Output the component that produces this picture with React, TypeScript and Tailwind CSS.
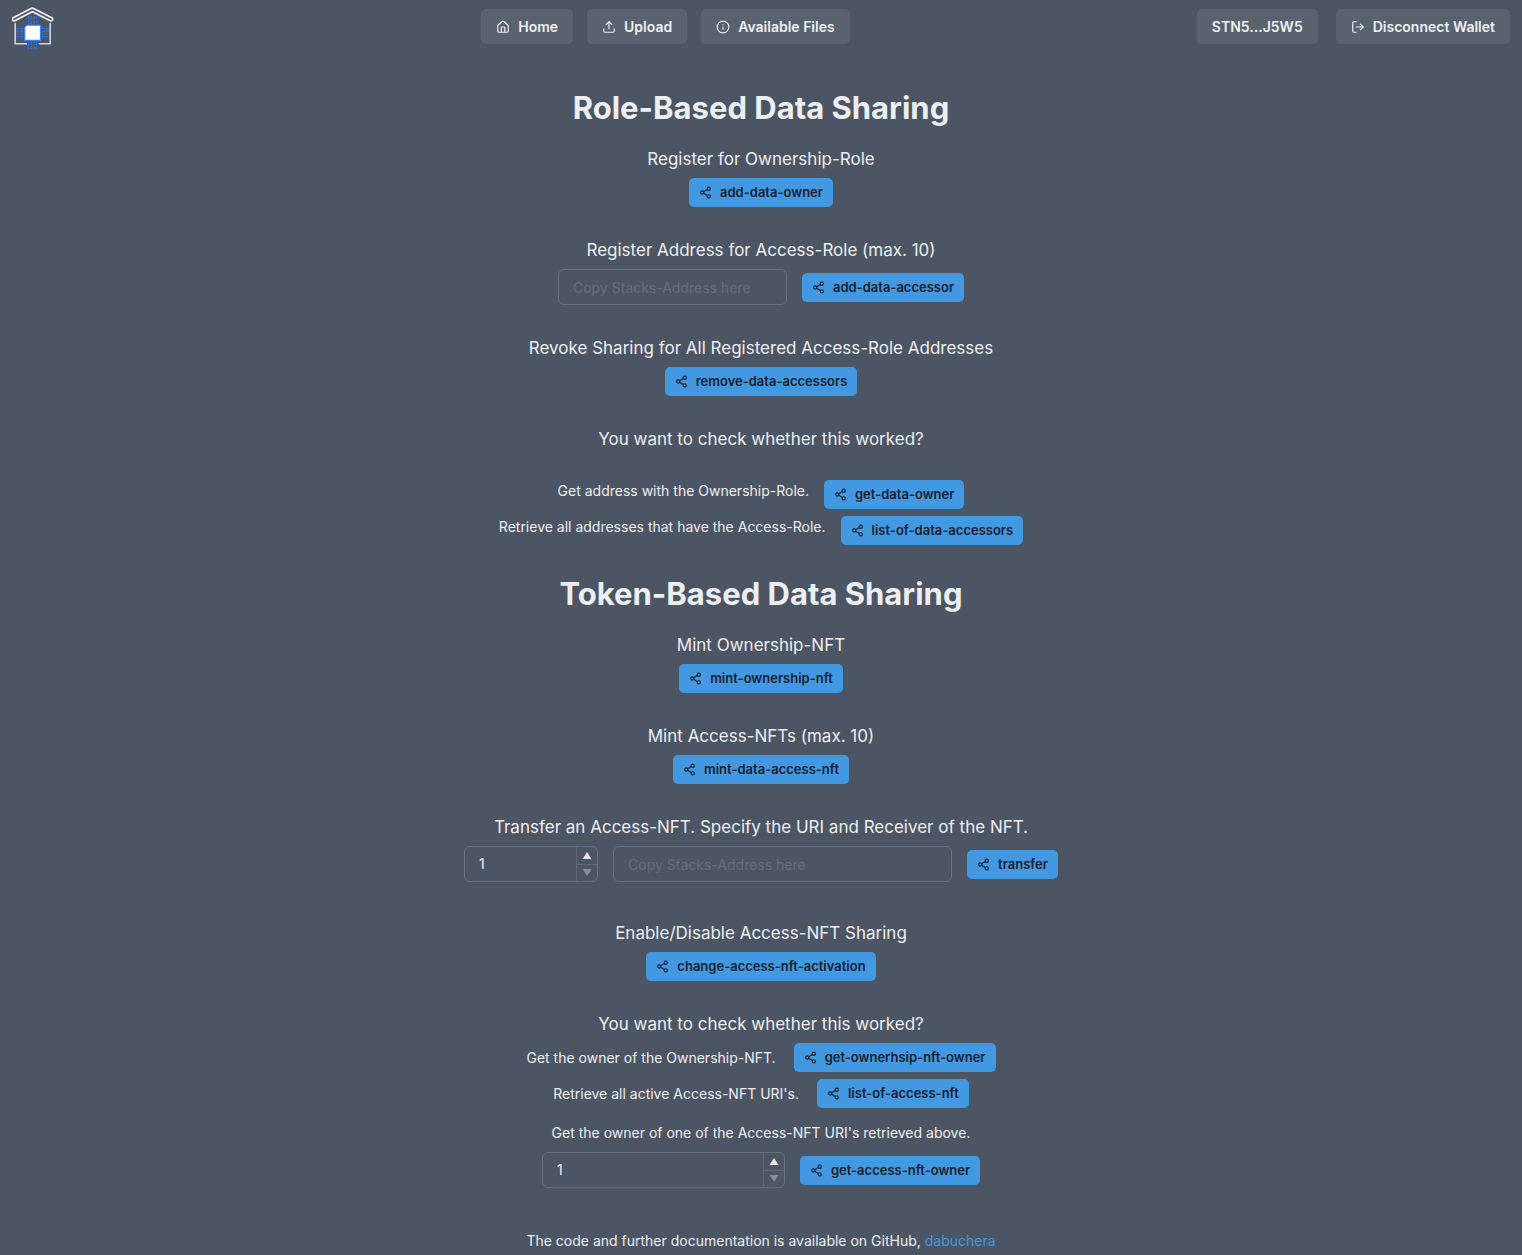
import { useState, type ReactNode } from "react";
import { House, Info, LogOut, Share2, Upload } from "lucide-react";

function Logo() {
  return (
    <svg width="44" height="46" viewBox="12 5 44 46" fill="none" aria-hidden="true">
      <path d="M15.2 23v20.7H27M38.8 43.7H50.2V23" stroke="#cfd4dc" strokeWidth="1.6" />
      <path
        d="M14 19.2 32.3 9.8 51 19.2"
        stroke="#f1f3f5"
        strokeWidth="5"
        strokeLinecap="round"
        strokeLinejoin="round"
      />
      <path
        d="M14 19.2 32.3 9.8 51 19.2"
        stroke="#4c5564"
        strokeWidth="1.8"
        strokeLinecap="round"
        strokeLinejoin="round"
      />
      <g stroke="#2f74e0" strokeWidth="1.2" strokeDasharray="3.4 0.9">
        <path d="M28.6 23.8v-8M31.3 23.8v-8M34 23.8v-8M36.7 23.8v-8" />
        <path d="M28.6 41.6v8M31.3 41.6v8M34 41.6v8M36.7 41.6v8" />
        <path d="M23.4 28.6h-7M23.4 31.3h-7M23.4 34h-7M23.4 36.7h-7" />
        <path d="M41.6 28.6h7M41.6 31.3h7M41.6 34h7M41.6 36.7h7" />
      </g>
      <path d="M26.8 25.2h13.7v15.2H24.7V27.4z" fill="#fff" stroke="#3b82f6" strokeWidth="1.2" />
    </svg>
  );
}

function NavButton({ icon, children }: { icon?: ReactNode; children: ReactNode }) {
  return (
    <button
      type="button"
      className="flex h-[35px] items-center gap-2 rounded-[5px] bg-[#59626f] px-[15px] text-sm font-semibold text-[#eef0f2]"
    >
      {icon}
      {children}
    </button>
  );
}

function ActionButton({ children }: { children: ReactNode }) {
  return (
    <button
      type="button"
      className="flex h-[29px] items-center gap-2 rounded-[5px] bg-[#4299e1] px-2.5 text-[13px] font-semibold text-[#1a202c]"
    >
      <Share2 size={13} strokeWidth={2} />
      {children}
    </button>
  );
}

function Section({ title, children }: { title: string; children?: ReactNode }) {
  return (
    <section className="flex flex-col items-center gap-[5px]">
      <h2 className="text-[17px] leading-7">{title}</h2>
      {children}
    </section>
  );
}

function AddressInput({ className }: { className: string }) {
  return (
    <input
      type="text"
      aria-label="Stacks address"
      placeholder="Copy Stacks-Address here"
      className={`h-9 rounded-md border border-[#687180] bg-transparent px-3.5 text-sm placeholder:text-[#656e7b] ${className}`}
    />
  );
}

function NumberInput({ label, className }: { label: string; className: string }) {
  const [value, setValue] = useState(1);
  return (
    <div className={`flex h-9 overflow-hidden rounded-md border border-[#687180] ${className}`}>
      <input
        type="number"
        aria-label={label}
        value={value}
        min={1}
        onChange={(e) => setValue(Number(e.target.value))}
        className="min-w-0 flex-1 appearance-none bg-transparent px-3.5 text-sm outline-none [appearance:textfield] [&::-webkit-inner-spin-button]:appearance-none"
      />
      <div className="flex w-[21px] flex-col divide-y divide-[#5f6877] border-l border-[#5f6877]">
        <button
          type="button"
          aria-label="Increase"
          onClick={() => setValue(value + 1)}
          className="flex flex-1 items-center justify-center"
        >
          <svg width="10" height="7" viewBox="0 0 10 7" aria-hidden="true">
            <path d="M5 0 9.5 7h-9z" fill="#e2e4e7" />
          </svg>
        </button>
        <button
          type="button"
          aria-label="Decrease"
          disabled={value <= 1}
          onClick={() => setValue(value - 1)}
          className="flex flex-1 items-center justify-center"
        >
          <svg width="10" height="7" viewBox="0 0 10 7" aria-hidden="true">
            <path d="M5 7 .5 0h9z" fill="#888e98" />
          </svg>
        </button>
      </div>
    </div>
  );
}

export default function App() {
  return (
    <div className="min-h-screen bg-[#4c5564] font-['Inter',sans-serif] text-sm text-[#eceef0]">
      <header className="flex items-start justify-between px-3 pt-[9px]">
        <a href="#" aria-label="Start page" className="-mt-1 w-[122px]">
          <Logo />
        </a>
        <nav className="flex gap-3.5">
          <NavButton icon={<House size={14} />}>Home</NavButton>
          <NavButton icon={<Upload size={14} />}>Upload</NavButton>
          <NavButton icon={<Info size={14} />}>Available Files</NavButton>
        </nav>
        <div className="flex gap-[18px]">
          <NavButton>STN5...J5W5</NavButton>
          <NavButton icon={<LogOut size={14} />}>Disconnect Wallet</NavButton>
        </div>
      </header>

      <main className="flex flex-col items-center pt-9">
        <h1 className="mb-4 text-[31px] leading-[42px] font-bold">Role-Based Data Sharing</h1>
        <div className="flex flex-col gap-[29px]">
          <Section title="Register for Ownership-Role">
            <ActionButton>add-data-owner</ActionButton>
          </Section>
          <Section title="Register Address for Access-Role (max. 10)">
            <div className="flex items-center gap-[15px]">
              <AddressInput className="w-[229px]" />
              <ActionButton>add-data-accessor</ActionButton>
            </div>
          </Section>
          <Section title="Revoke Sharing for All Registered Access-Role Addresses">
            <ActionButton>remove-data-accessors</ActionButton>
          </Section>
          <Section title="You want to check whether this worked?">
            <div className="mt-[22px] flex flex-col items-center gap-[7px]">
              <div className="flex items-start gap-[15px]">
                <p className="leading-[22px]">Get address with the Ownership-Role.</p>
                <ActionButton>get-data-owner</ActionButton>
              </div>
              <div className="flex items-start gap-[15px]">
                <p className="leading-[22px]">Retrieve all addresses that have the Access-Role.</p>
                <ActionButton>list-of-data-accessors</ActionButton>
              </div>
            </div>
          </Section>
        </div>

        <h1 className="mt-7 mb-4 text-[31px] leading-[42px] font-bold">Token-Based Data Sharing</h1>
        <div className="flex flex-col gap-[29px]">
          <Section title="Mint Ownership-NFT">
            <ActionButton>mint-ownership-nft</ActionButton>
          </Section>
          <Section title="Mint Access-NFTs (max. 10)">
            <ActionButton>mint-data-access-nft</ActionButton>
          </Section>
          <Section title="Transfer an Access-NFT. Specify the URI and Receiver of the NFT.">
            <div className="mb-2 flex items-center gap-[15px]">
              <NumberInput label="NFT URI to transfer" className="w-[134px]" />
              <AddressInput className="w-[339px]" />
              <ActionButton>transfer</ActionButton>
            </div>
          </Section>
          <Section title="Enable/Disable Access-NFT Sharing">
            <ActionButton>change-access-nft-activation</ActionButton>
          </Section>
          <Section title="You want to check whether this worked?">
            <div className="flex flex-col items-center gap-[7px]">
              <div className="flex items-center gap-[18px]">
                <p>Get the owner of the Ownership-NFT.</p>
                <ActionButton>get-ownerhsip-nft-owner</ActionButton>
              </div>
              <div className="flex items-center gap-[18px]">
                <p>Retrieve all active Access-NFT URI's.</p>
                <ActionButton>list-of-access-nft</ActionButton>
              </div>
            </div>
            <p className="my-2.5 mb-1">Get the owner of one of the Access-NFT URI's retrieved above.</p>
            <div className="flex items-center gap-[15px]">
              <NumberInput label="NFT URI to look up" className="w-[243px]" />
              <ActionButton>get-access-nft-owner</ActionButton>
            </div>
          </Section>
        </div>
      </main>

      <footer className="pt-[43px] pb-1 text-center">
        The code and further documentation is available on GitHub,{" "}
        <a href="#" className="text-[#4299e1]">
          dabuchera
        </a>
      </footer>
    </div>
  );
}
